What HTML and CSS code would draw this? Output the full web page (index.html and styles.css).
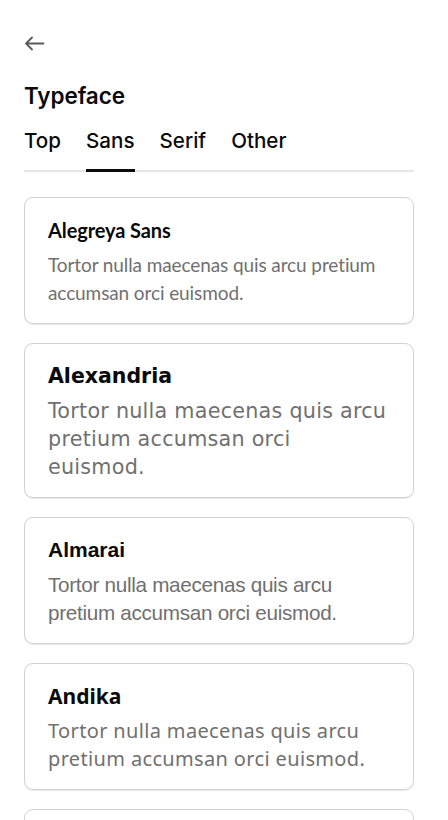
FILE: index.html
```html
<!DOCTYPE html>
<html lang="en">
<head>
<meta charset="utf-8">
<title>Typeface</title>
<link rel="stylesheet" href="styles.css">
</head>
<body>
<div class="page">
  <button class="back" aria-label="Back">
    <svg width="21" height="15" viewBox="0 0 21 15" fill="none" stroke="#5a5a5a" stroke-width="1.8" stroke-linecap="round" stroke-linejoin="round">
      <path d="M19.5 7.5H2M8 1.5L2 7.5l6 6"/>
    </svg>
  </button>
  <h1 class="title">Typeface</h1>
  <nav class="tabs">
    <span class="tab">Top</span>
    <span class="tab active">Sans</span>
    <span class="tab">Serif</span>
    <span class="tab">Other</span>
  </nav>
  <div class="list">
    <div class="card f-alegreya">
      <div class="name">Alegreya Sans</div>
      <div class="sample">Tortor nulla maecenas quis arcu pretium accumsan orci euismod.</div>
    </div>
    <div class="card f-alexandria">
      <div class="name">Alexandria</div>
      <div class="sample">Tortor nulla maecenas quis arcu pretium accumsan orci euismod.</div>
    </div>
    <div class="card f-almarai">
      <div class="name">Almarai</div>
      <div class="sample">Tortor nulla maecenas quis arcu pretium accumsan orci euismod.</div>
    </div>
    <div class="card f-andika">
      <div class="name">Andika</div>
      <div class="sample">Tortor nulla maecenas quis arcu pretium accumsan orci euismod.</div>
    </div>
    <div class="card f-alegreya">
      <div class="name">Anek Latin</div>
      <div class="sample">Tortor nulla maecenas quis arcu pretium accumsan orci euismod.</div>
    </div>
  </div>
</div>
</body>
</html>
```
FILE: styles.css
```css
html, body {
  margin: 0;
  padding: 0;
  background: #ffffff;
}
body {
  font-family: Inter, "Liberation Sans", sans-serif;
  color: #0a0a0a;
}
.page {
  padding: 0 34px 0 24px;
}
.back {
  display: block;
  margin: 36px 0 0 0;
  padding: 0;
  border: 0;
  background: none;
  width: 21px;
  height: 15px;
}
.back svg { display: block; }
.title {
  margin: 31px 0 0 0;
  font-size: 22.5px;
  line-height: 28px;
  font-weight: 600;
  letter-spacing: -0.1px;
}
.tabs {
  margin-top: 17px;
  display: flex;
  gap: 25px;
  border-bottom: 2px solid #e4e6ea;
}
.tab {
  font-size: 20.6px;
  line-height: 28px;
  font-weight: 500;
  padding-bottom: 14px;
  margin-bottom: -2px;
  border-bottom: 3px solid transparent;
}
.tab.active {
  border-bottom-color: #0a0a0f;
}
.list {
  margin-top: 25px;
  display: flex;
  flex-direction: column;
  gap: 19px;
}
.card {
  border: 1px solid #d2d2d2;
  border-radius: 9px;
  box-shadow: 0 1px 1px rgba(0,0,0,0.1);
  padding: 16px 23px;
}
.name {
  font-weight: 700;
  color: #0a0a0a;
  line-height: 32px;
  margin-bottom: 5px;
}
.sample {
  color: #707070;
  line-height: 28px;
}
.f-alegreya .name { font-family: Lato, sans-serif; font-size: 20px; letter-spacing: -0.1px; }
.f-alegreya .sample { font-family: Lato, sans-serif; font-size: 19px; letter-spacing: -0.1px; }
.f-alexandria .name { font-family: "DejaVu Sans", sans-serif; font-size: 20.5px; }
.f-alexandria .sample { font-family: "DejaVu Sans", sans-serif; font-size: 20.7px; letter-spacing: 0.25px; }
.f-almarai .name { font-family: "Liberation Sans", sans-serif; font-size: 21px; }
.f-almarai .sample { font-family: "Liberation Sans", sans-serif; font-size: 20.7px; letter-spacing: -0.3px; }
.f-andika .name { font-family: "Noto Sans", sans-serif; font-size: 21px; }
.f-andika .sample { font-family: "Noto Sans", sans-serif; font-size: 20px; letter-spacing: 0.35px; }
```
